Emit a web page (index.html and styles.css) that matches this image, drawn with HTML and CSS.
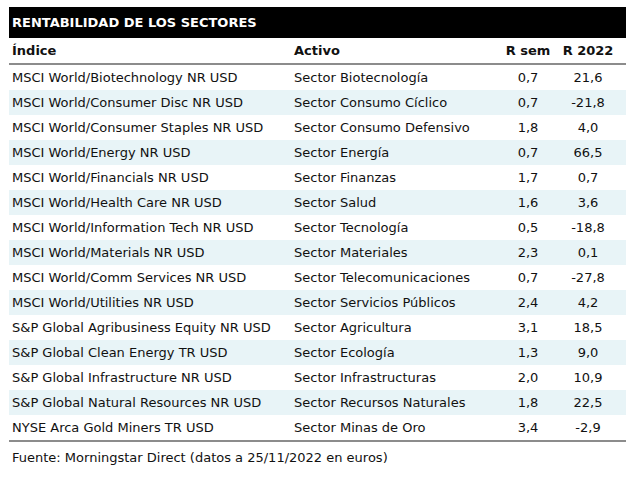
FILE: index.html
```html
<!DOCTYPE html>
<html lang="es">
<head>
<meta charset="utf-8">
<title>Rentabilidad de los sectores</title>
<link rel="stylesheet" href="styles.css">
</head>
<body>
<div class="wrap">
  <div class="title">RENTABILIDAD DE LOS SECTORES</div>
  <table class="tbl">
    <colgroup>
      <col class="c1"><col class="c2"><col class="c3"><col class="c4">
    </colgroup>
    <thead>
      <tr><th class="l">Índice</th><th class="l">Activo</th><th class="n">R sem</th><th class="n n2">R 2022</th></tr>
    </thead>
    <tbody>
      <tr><td>MSCI World/Biotechnology NR USD</td><td>Sector Biotecnología</td><td class="n">0,7</td><td class="n n2">21,6</td></tr>
      <tr class="alt"><td>MSCI World/Consumer Disc NR USD</td><td>Sector Consumo Cíclico</td><td class="n">0,7</td><td class="n n2">-21,8</td></tr>
      <tr><td>MSCI World/Consumer Staples NR USD</td><td>Sector Consumo Defensivo</td><td class="n">1,8</td><td class="n n2">4,0</td></tr>
      <tr class="alt"><td>MSCI World/Energy NR USD</td><td>Sector Energía</td><td class="n">0,7</td><td class="n n2">66,5</td></tr>
      <tr><td>MSCI World/Financials NR USD</td><td>Sector Finanzas</td><td class="n">1,7</td><td class="n n2">0,7</td></tr>
      <tr class="alt"><td>MSCI World/Health Care NR USD</td><td>Sector Salud</td><td class="n">1,6</td><td class="n n2">3,6</td></tr>
      <tr><td>MSCI World/Information Tech NR USD</td><td>Sector Tecnología</td><td class="n">0,5</td><td class="n n2">-18,8</td></tr>
      <tr class="alt"><td>MSCI World/Materials NR USD</td><td>Sector Materiales</td><td class="n">2,3</td><td class="n n2">0,1</td></tr>
      <tr><td>MSCI World/Comm Services NR USD</td><td>Sector Telecomunicaciones</td><td class="n">0,7</td><td class="n n2">-27,8</td></tr>
      <tr class="alt"><td>MSCI World/Utilities NR USD</td><td>Sector Servicios Públicos</td><td class="n">2,4</td><td class="n n2">4,2</td></tr>
      <tr><td>S&amp;P Global Agribusiness Equity NR USD</td><td>Sector Agricultura</td><td class="n">3,1</td><td class="n n2">18,5</td></tr>
      <tr class="alt"><td>S&amp;P Global Clean Energy TR USD</td><td>Sector Ecología</td><td class="n">1,3</td><td class="n n2">9,0</td></tr>
      <tr><td>S&amp;P Global Infrastructure NR USD</td><td>Sector Infrastructuras</td><td class="n">2,0</td><td class="n n2">10,9</td></tr>
      <tr class="alt"><td>S&amp;P Global Natural Resources NR USD</td><td>Sector Recursos Naturales</td><td class="n">1,8</td><td class="n n2">22,5</td></tr>
      <tr class="last"><td>NYSE Arca Gold Miners TR USD</td><td>Sector Minas de Oro</td><td class="n">3,4</td><td class="n n2">-2,9</td></tr>
    </tbody>
  </table>
  <div class="src">Fuente: Morningstar Direct (datos a 25/11/2022 en euros)</div>
</div>
</body>
</html>
```

FILE: styles.css
```css
html, body {
  margin: 0;
  padding: 0;
  background: #ffffff;
}
body {
  font-family: "DejaVu Sans", Verdana, sans-serif;
  font-size: 13px;
  color: #111111;
}
.wrap {
  width: 617px;
  padding: 7px 0 0 9px;
}
.title {
  height: 31px;
  background: #000000;
  color: #ffffff;
  font-weight: bold;
  font-size: 13px;
  line-height: 32px;
  padding-left: 3px;
  box-sizing: border-box;
}
.tbl {
  width: 617px;
  border-collapse: collapse;
  table-layout: fixed;
}
.c1 { width: 282px; }
.c2 { width: 209px; }
.c3 { width: 56px; }
.c4 { width: 70px; }
.tbl th {
  height: 25px;
  font-weight: bold;
  font-size: 13px;
  padding: 0 3px;
  border-bottom: 2px solid #8c8c8c;
  vertical-align: middle;
}
.tbl th.l { text-align: left; }
.tbl td {
  height: 25px;
  padding: 0 3px;
  vertical-align: middle;
  white-space: nowrap;
}
.tbl .n { text-align: center; }
.tbl .n2 { padding-right: 9px; }
.tbl tr.alt td { background: #e8f4f7; }
.tbl tr.last td { border-bottom: 2px solid #8c8c8c; }
.src {
  padding: 8px 0 0 3px;
  line-height: 16px;
}
```
